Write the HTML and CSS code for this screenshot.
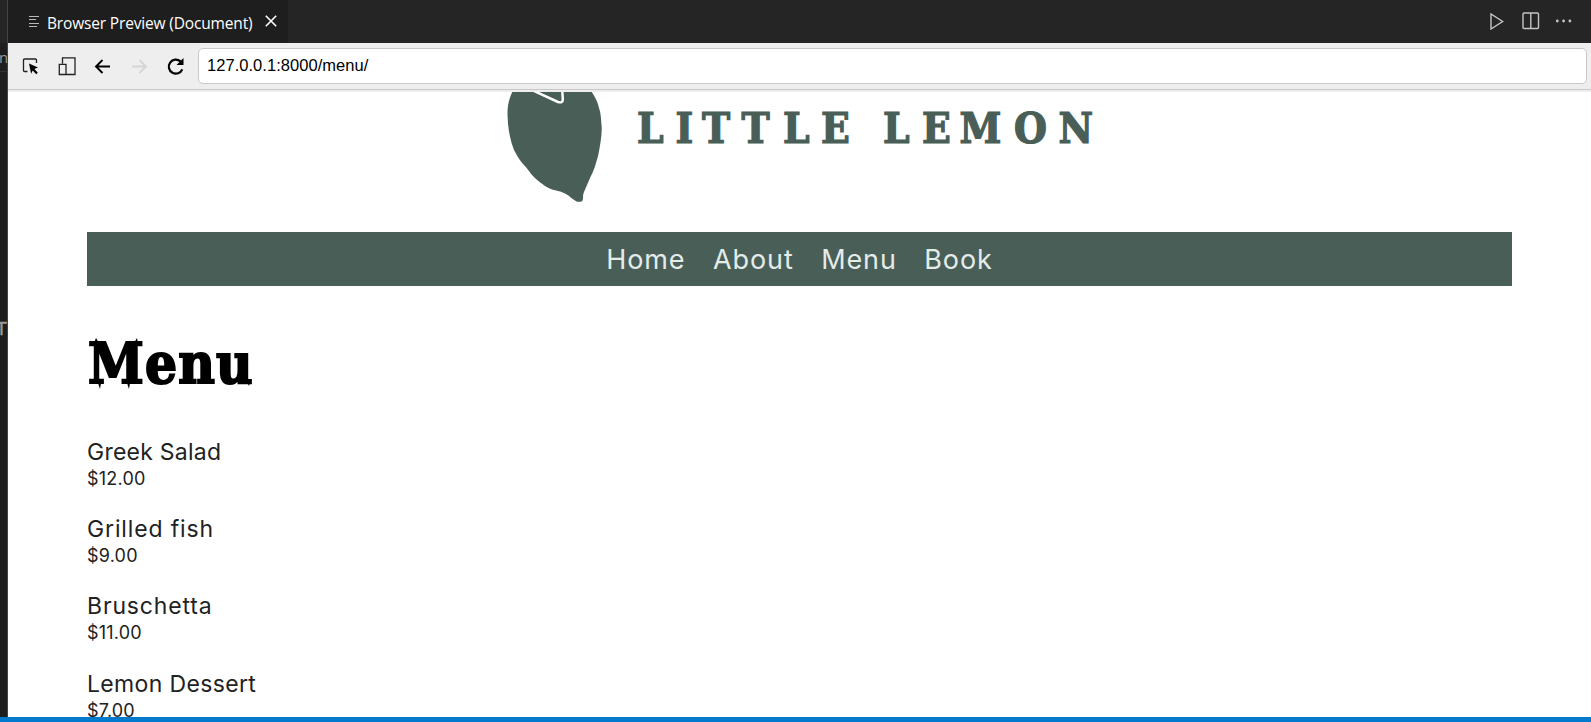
FILE: index.html
```html
<!DOCTYPE html>
<html lang="en">
<head>
<meta charset="utf-8">
<title>Browser Preview</title>
<link rel="stylesheet" href="styles.css">
</head>
<body>
<div class="window">
  <aside class="side"><div class="side-top"></div><div class="side-tab">n</div><div class="side-mark">T</div></aside>
  <section class="pane">
    <header class="tabs">
      <div class="tab">
        <svg class="doc-icon" width="12" height="14" viewBox="0 0 12 14"><path d="M1 1.500h10M1 4.500h7M1 8.500h10M1 11.500h8" /></svg>
        <span class="tab-title">Browser Preview (Document)</span>
        <svg class="close-icon" width="12" height="12" viewBox="0 0 12 12"><path d="M.8.8l10.4 10.4M11.2.8.8 11.2"/></svg>
      </div>
      <div class="actions">
        <svg width="14" height="17" viewBox="0 0 14 17"><path d="M1 1v15L12.6 8.500z"/></svg>
        <svg width="18" height="18" viewBox="0 0 18 18"><rect x="1" y="1" width="15.500" height="15.500" rx="1"/><path d="M8.800 1v15.500"/></svg>
        <svg class="dots" width="18" height="4" viewBox="0 0 18 4"><circle cx="2.300" cy="2" r="1.400"/><circle cx="8.600" cy="2" r="1.400"/><circle cx="14.900" cy="2" r="1.400"/></svg>
      </div>
    </header>
    <div class="toolbar">
      <svg class="tools" width="165" height="20" viewBox="0 0 165 20">
        <g class="line">
          <path d="M5.500 14.500H2.500a1 1 0 0 1-1-1V3a1 1 0 0 1 1-1h11a1 1 0 0 1 1 1v3"/>
          <path d="M40.500 6.500V.800H53v16.700H44.500M37.300 7.300H44v10.200h-6.700z"/>
        </g>
        <path class="solid" d="M7 6.500l9 4-3.600 1.500 3.400 3.800-1.500 1.400-3.600-3.700-1.600 3.300z"/>
        <path class="arrow" d="M88 9.500H74.500M80.500 3L74 9.500l6.500 6.500"/>
        <path class="arrow muted" d="M110 9.500H123.500M117.500 3l6.500 6.500-6.500 6.500"/>
        <path class="arrow reload" d="M160.300 12.300A7 7 0 1 1 158.500 4.400L160.500 6.500"/>
        <path class="solid" d="M161.500 1v7h-7z"/>
      </svg>
      <div class="address">127.0.0.1:8000/menu/</div>
    </div>
    <main class="page">
      <svg class="logo" width="610" height="112" viewBox="0 0 610 112" role="img">
        <path class="lemon" d="M14.300 0C10 9 9 17 9.700 26C10 36 12 48 16 58C20 66 24 71 28.700 76C34 84 40 89 47 94C54 99 61 98 67 101.500C72 104 75 108 79 109.700C82 110 84 110 84.700 108C85.500 105 84.500 103 86 100C88 95 90 91 92 86C96 79 98 71 100.300 63C102 54 104 44 103.700 35C103 28 103 21 101 16C100 10 97 5 93.700 0z"/>
        <path class="leaf" d="M35-1.500L60 10Q65 11.500 64.800 7L64.300-1"/>
        <text class="brand" y="51" x="139 177.500 204 243.500 285 323 385 424 461.500 516 560.500">LITTLELEMON</text>
      </svg>
      <nav class="nav"><a>Home</a><a>About</a><a>Menu</a><a>Book</a></nav>
      <div class="heading"><h1>Menu</h1><svg class="marks" width="170" height="54" viewBox="0 0 170 54"><path d="M6 5l2-5 3 5zM46 5l3-5 1 5zM10 45l2 6 1-6zM39 45l2 6 1-6zM159 44l2 4 1-4z"/></svg></div>
      <ul class="dishes">
        <li><p class="dish greek">Greek Salad</p><p class="price">$12.00</p></li>
        <li><p class="dish">Grilled fish</p><p class="price">$9.00</p></li>
        <li><p class="dish">Bruschetta</p><p class="price">$11.00</p></li>
        <li><p class="dish dessert">Lemon Dessert</p><p class="price">$7.00</p></li>
      </ul>
    </main>
  </section>
</div>
<footer class="status"></footer>
</body>
</html>
```
FILE: styles.css
```css
*{box-sizing:border-box}
body{margin:0;height:722px;overflow:hidden;display:flex;flex-direction:column;background:#fff}
h1,p,ul{margin:0;padding:0}
li{list-style:none}
.window{height:717px;flex:none;display:flex}
.status{height:5px;flex:none;background:#007acc}
.side{width:8px;flex:none;background:#1e1e1e;border-right:1px solid #444;overflow:hidden;font-family:"Open Sans",sans-serif;color:#999}
.side-top{height:43px;background:#252526}
.side-tab{height:29px;border-bottom:1px solid #333;font-size:15px;line-height:29px;text-indent:-1px}
.side-mark{margin-top:245px;font:18px/24px "Liberation Sans",sans-serif;text-indent:-4px;-webkit-text-stroke:.5px #999}
.pane{flex:1;min-width:0;display:flex;flex-direction:column}
.tabs{height:43px;flex:none;background:#252526;display:flex;justify-content:space-between}
.tab{width:280px;background:#1e1e1e;display:flex;align-items:center;padding-left:20px}
.doc-icon{fill:none;stroke:#b8b8b8;stroke-width:1;margin-right:7px;flex:none}
.tab-title{width:206px;flex:none;color:#fff;font:15.500px/20px "Open Sans",sans-serif;letter-spacing:-.16px;white-space:nowrap;padding-top:2px}
.close-icon{fill:none;stroke:#fff;stroke-width:1.6;margin:-2px 0 0 12px;flex:none}
.actions{display:flex;align-items:center;gap:18px;padding-right:18px;fill:none;stroke:#c5c5c5;stroke-width:1.4}
.actions svg{margin-top:-1px}
.actions .dots{fill:#c5c5c5;stroke:none;margin-left:-3px}
.toolbar{height:49px;flex:none;display:flex;background:#eee;padding:5px 4px 0 14px;background-image:linear-gradient(#c8c8c8,#c8c8c8);background-size:100% 1px;background-position:0 46px;background-repeat:no-repeat}
.tools{margin-top:9px;flex:none}
.line{fill:none;stroke:#222;stroke-width:1.3}
.solid{fill:#000}
.arrow{fill:none;stroke:#000;stroke-width:1.9}
.muted{stroke:#d5d5d5}
.reload{stroke-width:2.2}
.address{height:36px;flex:1;margin-left:11px;border:1px solid #c8c8c8;border-radius:5px;background:#fff;color:#000;font:16.500px/33px "Liberation Sans",sans-serif;letter-spacing:.04px;padding-left:8px}
.page{flex:1;overflow:hidden;padding:0 79px}
.logo{display:block;margin:0 0 0 411px}
.lemon{fill:#495e57}
.leaf{fill:none;stroke:#fff;stroke-width:2.5}
.brand{fill:#495e57;stroke:#495e57;stroke-width:1.2;font:bold 42px "DejaVu Serif Condensed","DejaVu Serif",serif}
.nav{height:54px;width:1425px;margin-top:28px;background:#495e57;color:#e4ece9;font:27px/55px Inter,sans-serif;letter-spacing:.9px;display:flex;justify-content:center;gap:27.500px}
.heading{position:relative;height:130px;padding-top:43px}
h1{font:bold 56px/68px "DejaVu Serif Condensed","DejaVu Serif",serif;letter-spacing:1.2px;padding-left:1px;color:#000;-webkit-text-stroke:2px #000}
.marks{position:absolute;left:1px;top:52px}
.dishes{margin-top:22px;color:#222;font-family:Inter,sans-serif}
.dishes li{height:77.200px}
.dish{font-size:23px;line-height:28px;letter-spacing:.85px}
.greek{letter-spacing:.25px}
.dessert{letter-spacing:.35px}
.price{font-size:18px;line-height:25px;letter-spacing:.2px}
```
